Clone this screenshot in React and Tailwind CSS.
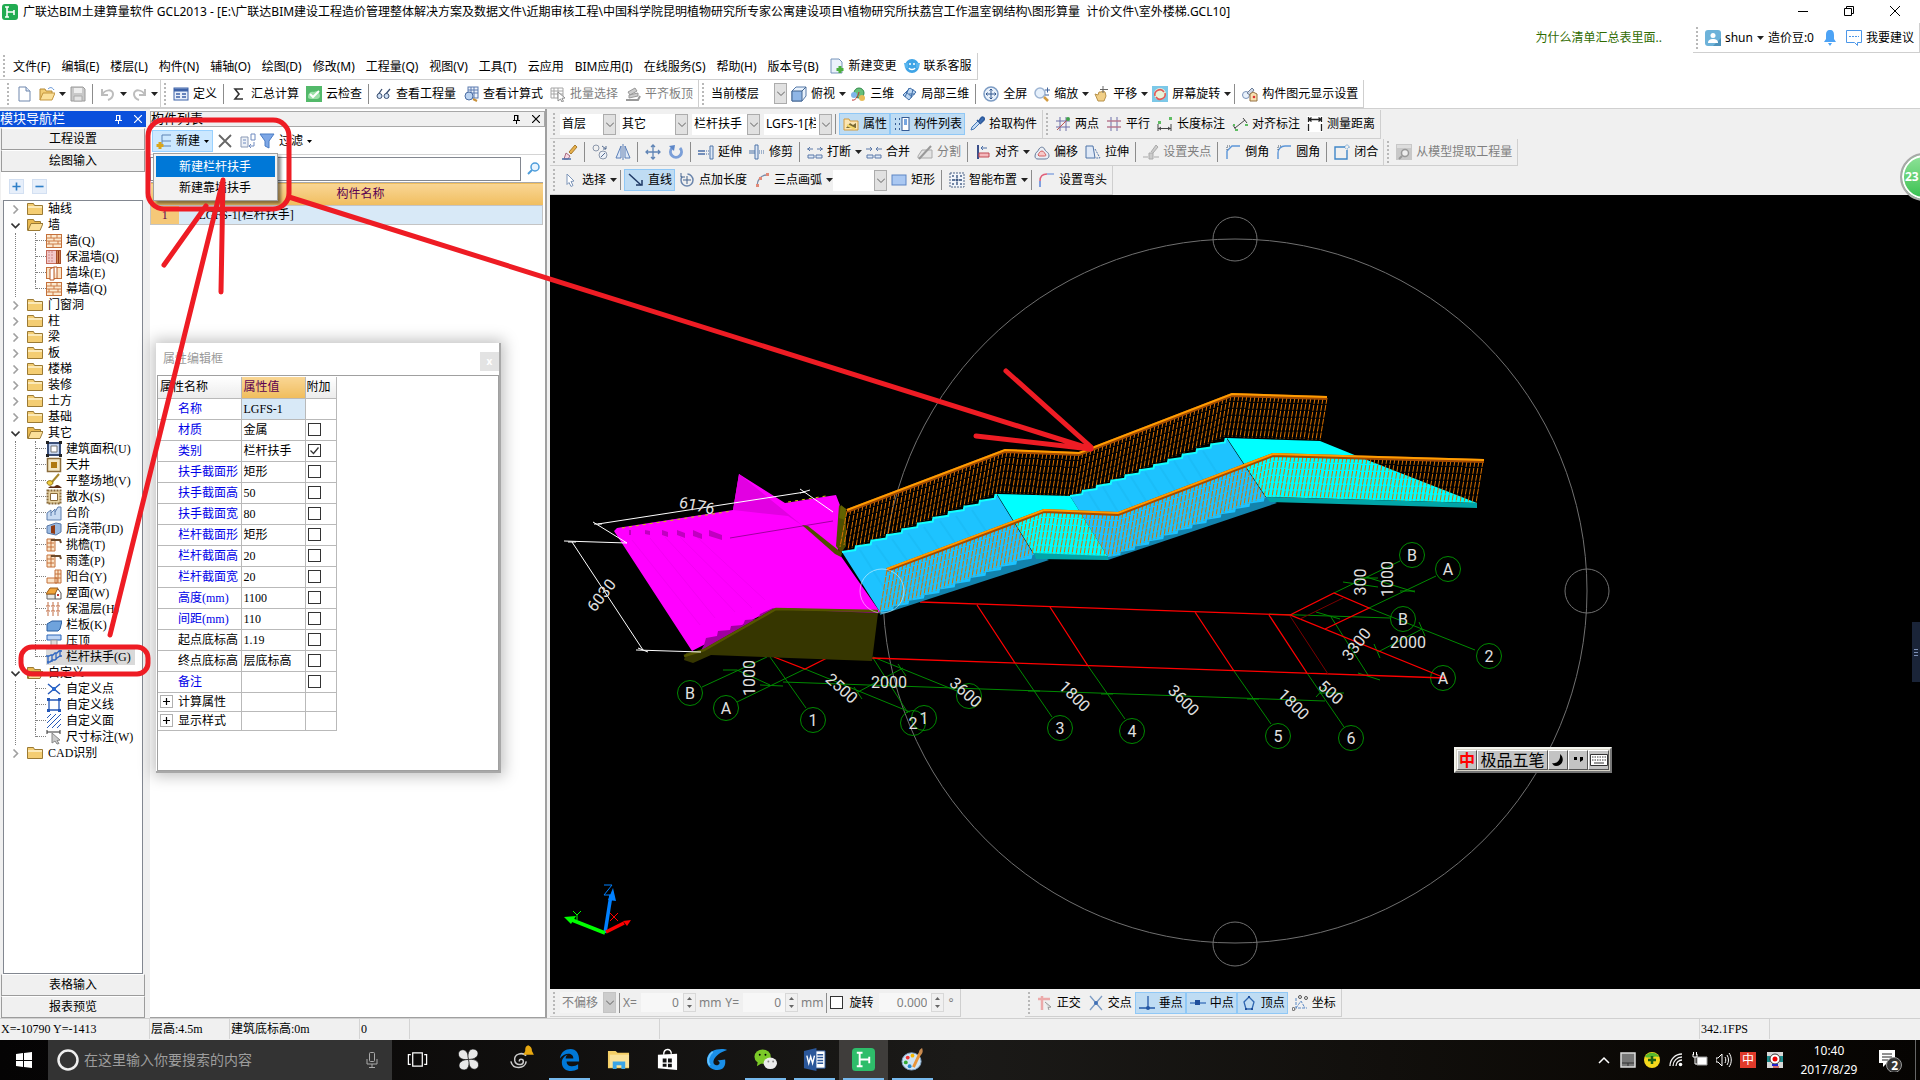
import React from "react";

const UI = "font-['Noto_Sans','Noto_Sans_CJK_SC',sans-serif]";
const SONG = "font-['Liberation_Serif','Noto_Sans_CJK_SC',serif]";

/* ---------- 16px tool icons ---------- */
const B = "#4f74a8";
const glyphs = {
  page: <><path d="M3 1h7l4 4v10H3z" fill="#fff" stroke="#6f87ad" /><path d="M10 1v4h4" fill="#dbe6f5" stroke="#6f87ad" /></>,
  open: <><path d="M1 14V3h5l1 2h6v2" fill="#f2cd75" stroke="#b58a36" /><path d="M1 14l3-7h12l-3 7z" fill="#fbe09a" stroke="#c4963f" /><path d="M9 3c2-2 4-2 6 1" fill="none" stroke="#5b8fd6" /></>,
  save: <><path d="M1 1h12l2 2v12H1z" fill="#c9c9c9" stroke="#9a9a9a" /><path d="M4 2h8v5H4z" fill="#eee" /><path d="M4 10h8v5H4z" fill="#e4e4e4" stroke="#aaa" /></>,
  undo: <path d="M2 3v6h6M2 9c3-6 11-6 11-1 0 3-2 5-5 6" fill="none" stroke="#bdbdbd" strokeWidth="2" />,
  redo: <path d="M14 3v6H8M14 9C11 3 3 3 3 8c0 3 2 5 5 6" fill="none" stroke="#bdbdbd" strokeWidth="2" />,
  define: <><rect x="1" y="2" width="14" height="12" fill="#e8effa" stroke="#3d62a8" /><path d="M1 4h14" stroke="#3d62a8" strokeWidth="3" /><path d="M3 8h4M3 11h4M9 8h4M9 11h4" stroke="#3d62a8" strokeWidth="1.5" /></>,
  sigma: <path d="M12 3H4l4 5-4 5h8" fill="none" stroke="#333" strokeWidth="1.6" />,
  check: <><rect width="16" height="16" fill="#53b96a" /><path d="M2 11c0-4 3-6 6-5 3-2 6 1 6 4 0 2-2 3-3 3H5c-2 0-3-1-3-2z" fill="#9be0a8" /><path d="M4 8l3 3 6-6" fill="none" stroke="#fff" strokeWidth="2" /></>,
  glasses: <><path d="M2 9l4-6M9 9l5-6" fill="none" stroke="#3a4f70" strokeWidth="1.3" /><circle cx="3.500" cy="10" r="2.500" fill="#cfe0f5" stroke="#3a4f70" /><circle cx="10.500" cy="10" r="2.500" fill="#cfe0f5" stroke="#3a4f70" /></>,
  calc: <><rect x="5" y="1" width="10" height="11" fill="#eef3fb" stroke="#5b7bb0" /><path d="M5 4h10M5 7h10M8 1v11M11 1v11" stroke="#5b7bb0" /><circle cx="6" cy="10" r="4" fill="#bcd4f2" stroke="#4b6da3" /><path d="M10 13l4 2" stroke="#c8903a" strokeWidth="2" /></>,
  batch: <><path d="M1 2h12v10H1zM1 5h12M1 8h12M4 2v10M8 2v10" fill="none" stroke="#a5a5a5" /><path d="M8 6l7 6-3 .3 1.500 3-1.500.7-1.500-3-2.500 2z" fill="#fff" stroke="#8d8d8d" /></>,
  slab: <><path d="M3 6l7-4 2 3-7 4zM4 9l9-2v3l-9 2z" fill="#ccc" stroke="#999" /><path d="M1 14h12l2-4" fill="none" stroke="#999" strokeWidth="2" /></>,
  cube: <><path d="M1 5l4-4h10v9l-4 5H1z" fill="#e9f2fc" stroke="#5578a8" /><path d="M1 5h10v10H1z" fill="#8fb6e6" stroke="#43658f" /><path d="M11 5l4-4" stroke="#43658f" /></>,
  orbit: <><circle cx="9" cy="7" r="5" fill="#67c07a" stroke="#31894a" /><circle cx="4" cy="9" r="3" fill="#7fb5ea" /><circle cx="12" cy="12" r="3" fill="#e9bd58" /><path d="M2 14c3 1 6-3 7-8" stroke="#b33" fill="none" /></>,
  local3d: <><path d="M2 9l7-7 6 4-7 8z" fill="#bcd6f2" stroke="#3f6ea8" /><path d="M5 6l6 5M4 11l4-9M12 3l-2 9M8 8l6 0" stroke="#3f6ea8" fill="none" /></>,
  full: <><circle cx="8" cy="8" r="7" fill="#eaf2fb" stroke="#7d9cc4" strokeWidth="1.500" /><path d="M8 3v10M3 8h10M6.500 4.500L8 3l1.500 1.500M6.500 11.500L8 13l1.500-1.500M4.500 6.500L3 8l1.500 1.500M11.500 6.500L13 8l-1.500 1.500" fill="none" stroke="#33588f" /></>,
  zoom: <><circle cx="6" cy="7" r="5" fill="#e6f0fb" stroke="#9db4d2" strokeWidth="1.500" /><path d="M10 11l4 4" stroke="#d39b3f" strokeWidth="2.500" /><path d="M11 4h5M13.500 1.500v5M11 9h4" stroke="#40639a" /></>,
  pan: <><path d="M2 8l3 1 1-3 2 0 2-1 2 1 1 4-2 5H5z" fill="#f1cf87" stroke="#b8924a" /><path d="M10 0v7M7 3.500h8" stroke="#666" /></>,
  screen: <><rect width="16" height="16" fill="#7cc8e8" /><rect x="2" y="2" width="12" height="12" rx="6" fill="#e8f3d8" /><path d="M3 10a5 5 0 0 1 9-4M13 7a5 5 0 0 1-9 4" fill="none" stroke="#e05a5a" strokeWidth="1.600" /></>,
  display: <><circle cx="4" cy="9" r="3.500" fill="#e9f1fb" stroke="#7a93b8" /><path d="M5 7l5-5 2 2-4 5z" fill="#cdd6e4" stroke="#6d7f99" /><path d="M8 15V8l3-2 4 2v7z" fill="#f8e0b0" stroke="#947040" /><circle cx="12" cy="11" r="1.300" fill="#d33" /></>,
  props: <><path d="M1 3h5l1 2h8v9H1z" fill="#fbe5b3" stroke="#d39b3f" /><path d="M3 12l4-5 3 2 3-2v5z" fill="#7a6a35" /><path d="M4 9l8 4" stroke="#f6d96c" strokeWidth="2" /></>,
  list: <><path d="M1 3h2M1 8h2M1 13h2M5 3h1M5 8h1M5 13h1" stroke="#345b95" strokeWidth="2" strokeDasharray="1 1" /><rect x="8" y="1.500" width="7" height="13" fill="#fff" stroke="#345b95" /><path d="M10 4h3M10 6h3M10 8h3" stroke="#4c8ad8" strokeWidth="1.500" /></>,
  picker: <><path d="M2 14l1-3 6-6 2 2-6 6z" fill="#c5dcf5" stroke="#4777b5" /><path d="M8 4l4 4M10 5l2-3c2-2 4 0 3 2l-3 3" fill="#3d6fb5" stroke="#2d5a9c" strokeWidth="1.500" /></>,
  twopt: <><path d="M5 1v14M11 1v14M1 5h14M1 11h14" stroke="#6c6fa8" /><path d="M2 14L14 2" stroke="#b55" /><circle cx="13" cy="3" r="2" fill="#3fa04b" /></>,
  parallel: <><path d="M5 1v14M11 1v14" stroke="#6c6fa8" /><path d="M1 5h14M1 11h14" stroke="#b87a90" strokeWidth="1.500" /></>,
  lendim: <><path d="M1 8v7M14 8v7M1 12.500h13M4 11l-2 1.500L4 14M11 11l2 1.500-2 1.500" fill="none" stroke="#444" /><path d="M1 5h3v3H1zM12 1h3v3h-3z" fill="#5ebd62" /></>,
  aligndim: <><path d="M3 12L13 4M1 9l3 5M11 2l4 5" fill="none" stroke="#444" /><path d="M1 8h2v2H1zM3 13h3v2H3zM13 8h3v2h-3z" fill="#5ebd62" /></>,
  measure: <><rect width="16" height="16" fill="#fff" /><path d="M1.500 1v5M14.500 1v5M2 3.500h12M4.500 1.500L2 3.500l2.500 2M11.500 1.500L14 3.500l-2.500 2M1.500 8v7M14.500 8v7" fill="none" stroke="#222" strokeWidth="1.300" /></>,
  brush: <><path d="M7 8l6-7 2 2-6 7z" fill="#e8b14d" stroke="#a87b2e" /><path d="M4 9l4 3-2 3H2z" fill="#f7d8e2" stroke="#a66a80" /><path d="M0 15h9" stroke="#4a6fa8" strokeWidth="1.500" /></>,
  copy: <><circle cx="4" cy="4" r="3" fill="none" stroke="#8b97ab" /><circle cx="11" cy="11" r="4" fill="#edf1f7" stroke="#8b97ab" /><path d="M9 13l4-4M10 2l4 3M14 2v3h-3" fill="none" stroke="#536a90" /></>,
  mirror: <><path d="M6 2v12H1zM10 2v12h5z" fill="#dfe9f7" stroke="#5b7fb8" /><path d="M8 0v16" stroke="#5b7fb8" /></>,
  move: <path d="M8 1v14M1 8h14M6 3l2-2 2 2M6 13l2 2 2-2M3 6L1 8l2 2M13 6l2 2-2 2" fill="none" stroke="#5f84b5" strokeWidth="1.300" />,
  rotate: <><path d="M4 4a5.500 5.500 0 1 0 8 0" fill="none" stroke="#7b9fd8" strokeWidth="3" /><path d="M1 2l6-1-1 6z" fill="#5c86c8" /></>,
  extend: <><path d="M0 7h7M0 10h7" stroke="#4a6ea6" strokeWidth="1.500" /><path d="M8 7h3M8 10h3" stroke="#4a6ea6" strokeDasharray="1 1" /><path d="M12 2h3v13h-3z" fill="#dfe9f7" stroke={B} /></>,
  trim: <><path d="M6 1h3v14H6z" fill="#dfe9f7" stroke={B} /><path d="M0 7h6M0 9h6" stroke={B} /><path d="M10 7h6M10 9h6" stroke={B} strokeDasharray="1 1" /></>,
  cut: <><path d="M1 11h6v3H1zM9 11h6v3H9z" fill="#dfe9f7" stroke="#5b79a8" /><path d="M0 5h6M10 5h6M3 3L1 5l2 2M13 3l2 2-2 2" fill="none" stroke="#5b79a8" /></>,
  merge: <><path d="M1 11h6v3H1zM9 11h6v3H9z" fill="#dfe9f7" stroke="#5b79a8" /><path d="M0 5h6M10 5h6M4 3l2 2-2 2M12 3l-2 2 2 2" fill="none" stroke="#5b79a8" /></>,
  split: <><path d="M1 12l4-6h10v8H1z" fill="#e4e4e4" stroke="#aaa" /><path d="M2 15L14 2" stroke="#999" strokeWidth="2" /></>,
  align: <><path d="M3 1v14" stroke="#3a4f8a" strokeWidth="2" /><path d="M4 9h10v4H4z" fill="#f4b8bc" stroke="#c04a55" /><path d="M6 4h6M8 2L6 4l2 2" fill="none" stroke="#4a6ea6" /></>,
  offset: <><path d="M1 12c0-4 3-4 4-7 2-3 5-2 6 1 1 2 4 2 4 6 0 2-2 3-4 3H4c-2 0-3-1-3-3z" fill="#e9eef5" stroke="#667a99" /><path d="M4 11c1-2 2-4 4-4s3 3 4 4c0 1-1 1-2 1H5z" fill="#f7c9c9" stroke="#d46060" /></>,
  stretch: <><path d="M1 2h7l2 12H1z" fill="#dfe9f7" stroke={B} /><path d="M10 5l5 9h-5" fill="none" stroke={B} strokeDasharray="2 1" /></>,
  grip: <><path d="M0 13h5M11 13h5" stroke="#aaa" /><path d="M6 9h4v6H6zM8 8l5-7 2 2-5 6" fill="#ccc" stroke="#aaa" /></>,
  chamfer: <><path d="M2 15V7l5-5h8" fill="none" stroke="#5b95d8" strokeWidth="1.400" /><path d="M2 6V2h4" fill="none" stroke="#456" strokeDasharray="1 1" /></>,
  fillet: <><path d="M2 15V9c0-4 3-7 7-7h6" fill="none" stroke="#5b95d8" strokeWidth="1.400" /><path d="M2 6V2h4" fill="none" stroke="#456" strokeDasharray="1 1" /></>,
  close: <><path d="M11 3H1v12h12V6" fill="none" stroke="#3f86c8" strokeWidth="1.400" /><circle cx="13" cy="3" r="2" fill="none" stroke="#3f86c8" strokeDasharray="1 1" /></>,
  extract: <><rect width="16" height="16" fill="#c8c8c8" /><path d="M1 1h14v3H1z" fill="#ddd" /><circle cx="9" cy="9" r="3.500" fill="#eee" stroke="#999" strokeWidth="1.500" /><path d="M6 12l-3 3" stroke="#999" strokeWidth="2" /></>,
  cursor: <path d="M5 2l7 7-3 .5 2 4-2 1-2-4-2 2z" fill="#fff" stroke="#7d95b8" />,
  line: <><path d="M1 2l12 11" stroke="#1f3864" strokeWidth="1.500" /><path d="M8 13h6V8" fill="none" stroke="#1f3864" strokeWidth="1.500" /></>,
  ptlen: <><circle cx="8" cy="8" r="6" fill="none" stroke="#6b86ad" strokeDasharray="22 6" strokeWidth="1.500" /><path d="M8 4v8M4 8h8M2 1v4h4" fill="none" stroke="#47648f" /></>,
  arc: <><path d="M3 14C3 8 7 3 13 3" fill="none" stroke="#7a8ca8" strokeWidth="1.300" /><path d="M2 12h3v3H2zM5 5h3v3H5zM12 1h3v3h-3z" fill="#e28a78" /></>,
  rect: <rect x="1" y="3" width="14" height="10" fill="#aac8f2" stroke="#5c85c4" />,
  smart: <><rect x="1" y="1" width="14" height="14" fill="#f2f5fa" stroke="#4d6487" strokeDasharray="2 1" /><path d="M8 3v3M8 10v3M3 8h3M10 8h3M8 6.500v3M6.500 8h3M4 3v2M12 3v2M4 11v2M12 11v2" stroke="#2d4a78" strokeWidth="1.300" /></>,
  elbow: <><path d="M1 15V9" stroke="#5b85d8" strokeWidth="1.500" /><path d="M1 9c0-5 2-7 7-7" fill="none" stroke="#e0607a" strokeWidth="1.500" /><path d="M8 2h7" stroke="#5b85d8" /></>,
  ortho: <><path d="M5 1v14M1 4h12" stroke="#ecaaaa" strokeWidth="2.500" /><path d="M8 7l6 5-3 .5 1 2.500" fill="#ddd" stroke="#999" /></>,
  cross: <><path d="M2 1l12 14M14 1L2 15" stroke="#7d9cc4" strokeWidth="1.300" /><circle cx="8" cy="8" r="2" fill="#3f6fb5" /></>,
  perp: <><path d="M9 1v12M0 13h16" stroke="#2458a6" strokeWidth="1.300" /><circle cx="9" cy="13" r="2" fill="#2458a6" /></>,
  mid: <><path d="M0 8h16" stroke="#4a7cc0" strokeWidth="1.500" /><rect x="5" y="5" width="5" height="5" fill="#1f4f9c" /></>,
  vertex: <><path d="M8 2l5 5-2 7H5L3 7z" fill="none" stroke="#2f66b0" strokeWidth="1.300" /><path d="M7 1h2v2H7zM4 13h2v2H4zM10 13h2v2h-2z" fill="#1f4f9c" /></>,
  coord: <><path d="M4 3v10h11M4 13l5-7 4 7" fill="none" stroke="#5b89c4" strokeDasharray="3 1" /><circle cx="8" cy="2" r="1.500" fill="none" stroke="#555" /><circle cx="14" cy="3" r="1.500" fill="none" stroke="#555" /><circle cx="1.500" cy="14" r="1.500" fill="none" stroke="#555" /></>,
  newdoc: <><path d="M2 1h8l3 3v11H2z" fill="#eaf2fb" stroke="#7694bb" /><path d="M11 8v7M7.500 11.500h7" stroke="#4caf3f" strokeWidth="3" /></>,
  service: <><circle cx="8" cy="8" r="7" fill="#3fa4e6" /><path d="M0 5h4v5H1zM12 5h4l-1 5h-3z" fill="#57b4ee" /><path d="M5 6h2M9 6h2M5 10c1 2 5 2 6 0" stroke="#fff" strokeWidth="1.500" fill="none" /></>,
  add: <><path d="M6 2h9M6 8h9M6 13h9M6 2v11" stroke="#5c83b5" fill="none" /><path d="M4 9v7M.5 12.500h7" stroke="#d9a51c" strokeWidth="3" /></>,
  del: <path d="M2 2l12 12M14 2L2 14" stroke="#666" strokeWidth="1.800" />,
  dup: <><path d="M1 4h7v10H1z" fill="#edf1f7" stroke="#8a99b5" /><path d="M3 7h3M3 10h3M11 1h4v6h-4zM14 9v4h-4M11 11l-2 2 2 2" fill="none" stroke="#6f8abf" /></>,
  funnel: <path d="M1 1h14l-5 7v7l-4-2V8z" fill="#7da7e6" stroke="#4b7cc4" />,
  brick: <><rect x=".5" y="1.500" width="15" height="13" fill="#fbe9d0" stroke="#c4703a" /><path d="M1 5h14M1 8h14M1 11h14M5 2v3M11 2v3M8 5v3M3 8v3M12 8v3M7 11v3" stroke="#cc7a44" /></>,
  insul: <><rect x=".5" y="1.500" width="10" height="13" fill="#f2c9c9" stroke="#c46a5a" /><path d="M3 2v12M6 2v12" stroke="#c88" strokeDasharray="2 1" /><rect x="10.500" y="1.500" width="4" height="13" fill="#e2a06a" stroke="#a8502a" /><path d="M12.500 2v12" stroke="#93371a" strokeWidth="1.500" /></>,
  pier: <><rect x=".5" y="2.500" width="15" height="11" fill="#fbe3c6" stroke="#c4703a" /><path d="M4 4l4-2v13H4zM8 2h3v12" fill="#fff" stroke="#b85a28" /></>,
  area: <><path d="M2 2h12v12H2z" fill="#c4d4ef" stroke="#3a4f7a" strokeWidth="2" /><path d="M5 5h6v6H5z" fill="#fff" stroke="#777" /><path d="M0 0h3v3H0zM13 0h3v3h-3zM0 13h3v3H0zM13 13h3v3h-3z" fill="#222" /></>,
  well: <><path d="M1.500 1.500h13v13h-13z" fill="#f5e8c4" stroke="#8a6b3a" strokeWidth="1.500" /><path d="M5 5h6v6H5z" fill="#b07a10" /></>,
  ground: <><path d="M13 1l-7 8" stroke="#a8872c" strokeWidth="2" /><path d="M1 9c2-2 5-2 6 1-1 3-5 3-6 0z" fill="#f0cc3c" stroke="#8f7316" /><path d="M2 15c3-4 5 0 7-2s4-1 7 2z" fill="#5a2a14" /></>,
  apron: <><path d="M1.500 1.500h13v13h-13z" fill="#e9d5a4" stroke="#8a6b3a" strokeWidth="2" strokeDasharray="2 1" /><path d="M4.500 4.500h7v7h-7z" fill="#fff" stroke="#8a6b3a" /></>,
  steps: <><path d="M1 15V8l4-3v3l4-4v3l3-5h3v13z" fill="#c9dbf2" stroke="#5d7eae" /><path d="M5 8v3M9 7v3" stroke="#5d7eae" /></>,
  belt: <><path d="M1 5l9-3 5 1v8l-5 3-9-2z" fill="#9cbbe2" stroke="#5878a8" /><path d="M5 5l4-1v9l-4-1z" fill="#8f3a14" /></>,
  eave: <><path d="M1 2h8v12H1z" fill="#fbe3c6" stroke="#c4703a" /><path d="M1 6h7M1 10h7M5 2v12" stroke="#c4703a" /><path d="M5 3h9l1 3" fill="none" stroke="#6b4a2c" strokeWidth="2" /></>,
  balcony: <><path d="M9 1h6v13H9zM1 9h10v5H1zM9 5h6M9 9h6M12 1v13" fill="#fbe3c6" stroke="#c4703a" /></>,
  roof: <><path d="M9 7l3-3 3 4v6H9z" fill="#fff" stroke="#555" /><path d="M1 9h8v5H1z" fill="#e8e8e8" stroke="#666" /><path d="M0 9l4-6h8L9 9z" fill="#f0a53c" stroke="#9b5c18" /><path d="M11 9h2v2h-2z" fill="#b33" /></>,
  heat: <path d="M2 1v14M7 1v14M12 1v14M0 5h15M0 10h15" stroke="#c06a40" strokeDasharray="4 1" />,
  panel: <path d="M1 7l5-3h10l-2 8-2 2H1z" fill="#6fa3dc" stroke="#2a5d9e" />,
  coping: <><path d="M1 2h14v5H1z" fill="#bcd4f5" stroke="#2d66b8" /><path d="M5 7h6v8H5z" fill="#ddd" stroke="#999" /></>,
  rail: <path d="M2 15V7M6 13V6M10 11V4M14 8V1M0 7h3l2-1h2l2-2h2l2-2h3M1 13h3l2-2h3l2-2 3-2h2" fill="none" stroke="#2f66c0" strokeWidth="1.300" />,
  cpt: <><path d="M2 3l12 10M14 3L2 13" stroke="#2458b8" strokeWidth="1.500" /><path d="M6 6h4v4H6z" fill="#2a6ad0" /></>,
  cline: <><path d="M3 3h10v10H3z" fill="#fff" stroke="#2458b8" strokeWidth="1.300" /><path d="M1 1h3v3H1zM12 1h3v3h-3zM1 12h3v3H1zM12 12h3v3h-3z" fill="#2458b8" /></>,
  cface: <path d="M1 5l4-4M1 10l9-9M1 15L15 1M6 15l9-9M11 15l4-4" stroke="#2458b8" />,
  dim: <><path d="M1 1v4M14 1v4M1 3h13" stroke="#333" /><path d="M6 4l8 7-3 .5 2 3-2 .5-2-3-3 2z" fill="#ccc" stroke="#888" /></>,
  folder: <><path d="M.5 13.500v-11h6l1 2h8v9z" fill="#f4cd72" stroke="#9b7a34" /><path d="M1 6h14" stroke="#fbe9b8" strokeWidth="2" /></>,
  folderOpen: <><path d="M.5 13.500v-11h6l1 2h6v2" fill="#e9b950" stroke="#9b7a34" /><path d="M1 13.500l3-7h12l-3 7z" fill="#fbdf98" stroke="#9b7a34" /></>,
};
const Icon = ({ n }) => <svg className="size-4 shrink-0" viewBox="0 0 16 16" aria-hidden="true">{glyphs[n]}</svg>;

const Caret = () => (
  <svg className="h-1 w-[7px] shrink-0" viewBox="0 0 7 4" aria-hidden="true"><path d="M0 0h7L3.500 4z" fill="#222" /></svg>
);

function Tool({ i, t, caret, on, off }) {
  return (
    <button
      disabled={off}
      aria-label={t || i}
      className={`flex h-[22px] shrink-0 items-center gap-1 border pl-[3px] ${caret ? "border-r-0 pr-0" : "pr-[2px]"} ${on ? "border-[#90c8f6] bg-[#bfdcf3]" : "border-transparent"} ${off ? "text-[#7f7f7f]" : ""}`}
    >
      {i && <Icon n={i} />}
      {t && <span className="whitespace-nowrap">{t}</span>}
      {caret && <Caret />}
    </button>
  );
}
const Sep = () => <span className="mx-[3px] h-5 w-px shrink-0 bg-[#8c8c8c]" />;
const Grip = () => <span className="mx-[3px] h-[22px] w-0 shrink-0 border-l-2 border-dotted border-[#b8b8b8]" />;
function Band({ children, className = "" }) {
  return <div className={`flex items-center border-r border-b border-[#cfcfcf] pr-[2px] ${className}`}>{children}</div>;
}
function Combo({ v, w, off, label }) {
  return (
    <span className={`relative flex h-[21px] shrink-0 ${w}`}>
      <select aria-label={label} disabled={off} className={`h-full w-full appearance-none overflow-hidden pl-0.5 pr-4 text-xs ${off ? "bg-[#f4f4f4] text-[#7f7f7f]" : "bg-white"}`}>
        <option>{v}</option>
      </select>
      <span className={`pointer-events-none absolute inset-y-0 right-0 flex w-[13px] items-center justify-center border ${off ? "border-[#c4c4c4] bg-[#cccccc]" : "border-[#acacac] bg-[#e1e1e1]"}`}>
        <svg className="h-[5px] w-2" viewBox="0 0 8 5"><path d="M0 .5l4 4 4-4" fill="none" stroke="#606060" /></svg>
      </span>
    </span>
  );
}
function Spin({ v, w, label }) {
  return (
    <span className="flex h-[19px] shrink-0">
      <input aria-label={label} disabled defaultValue={v} className={`bg-[#f7f7f7] pr-1 text-right text-xs text-[#7f7f7f] ${w}`} />
      <span className="flex w-[13px] flex-col border border-[#d8d8d8] bg-[#f0f0f0]">
        <button disabled aria-label={`${label} +`} className="flex flex-1 items-center justify-center"><svg className="h-[3px] w-[5px]" viewBox="0 0 5 3"><path d="M0 3h5L2.500 0z" fill="#666" /></svg></button>
        <button disabled aria-label={`${label} -`} className="flex flex-1 items-center justify-center"><svg className="h-[3px] w-[5px]" viewBox="0 0 5 3"><path d="M0 0h5L2.500 3z" fill="#666" /></svg></button>
      </span>
    </span>
  );
}
const Pin = () => <svg className="h-[9px] w-[7px]" viewBox="0 0 7 9"><path d="M1.500 0v5M5 0v5M1 .5h4M0 5.500h7M3.500 6v3M4.500 0v5" stroke="currentColor" fill="none" /></svg>;
const Ex = () => <svg className="size-2" viewBox="0 0 8 8"><path d="M0 0l8 8M8 0L0 8" stroke="currentColor" strokeWidth="1.200" /></svg>;

/* ---------- header ---------- */
function Header() {
  const menu = ["文件(F)", "编辑(E)", "楼层(L)", "构件(N)", "辅轴(O)", "绘图(D)", "修改(M)", "工程量(Q)", "视图(V)", "工具(T)", "云应用", "BIM应用(I)", "在线服务(S)", "帮助(H)", "版本号(B)"];
  return (
    <header className="bg-white">
      <div className="flex h-[23px] items-center pl-0.5">
        <svg className="mr-[5px] size-4" viewBox="0 0 16 16"><rect width="16" height="16" rx="3" fill="#22ac52" /><path d="M5 3v10M5 8h7M12 6v5M3 3h4M3 13h4" stroke="#fff" strokeWidth="1.600" /></svg>
        <h1 className="flex-1 whitespace-pre">广联达BIM土建算量软件 GCL2013 - [E:\广联达BIM建设工程造价管理整体解决方案及数据文件\近期审核工程\中国科学院昆明植物研究所专家公寓建设项目\植物研究所扶荔宫工作温室钢结构\图形算量  计价文件\室外楼梯.GCL10]</h1>
        <div className="flex gap-9 pr-5 pb-0.5">
          <button aria-label="最小化"><svg className="size-[10px]" viewBox="0 0 10 10"><path d="M0 5.500h10" stroke="#000" /></svg></button>
          <button aria-label="还原"><svg className="size-[10px]" viewBox="0 0 10 10"><path d="M.5 2.500h7v7h-7zM2.500 2.500v-2h7v7h-2" fill="none" stroke="#000" /></svg></button>
          <button aria-label="关闭"><svg className="size-[10px]" viewBox="0 0 10 10"><path d="M0 0l10 10M10 0L0 10" stroke="#000" /></svg></button>
        </div>
      </div>
      <div className="flex h-[30px] items-stretch justify-end">
        <a href="#faq" className="mr-[31px] self-center text-[#2f6b00]">为什么清单汇总表里面..</a>
        <Band className="gap-1">
          <Grip />
          <svg className="size-4" viewBox="0 0 16 16"><rect width="16" height="16" rx="3" fill="#6db2d9" /><path d="M8 16l8-8v8z" fill="#4e92ba" /><circle cx="8" cy="5.500" r="2.500" fill="#fff" /><path d="M3 13c0-3 2-4 5-4s5 1 5 4z" fill="#fff" /></svg>
          <span>shun</span><Caret />
          <span>造价豆:0</span>
          <svg className="mx-1.5 h-4 w-3" viewBox="0 0 12 16"><path d="M6 0c3 0 4 2 4 5v4l2 3H0l2-3V5c0-3 1-5 4-5zM4 13h4l-2 3z" fill="#4da3f5" /></svg>
          <svg className="h-4 w-4" viewBox="0 0 16 16"><path d="M.5.500h15v12h-4v3l-3-3h-8z" fill="#fff" stroke="#4c97e8" /><path d="M3 6.500h10" stroke="#4c97e8" strokeDasharray="2 1" /></svg>
          <button className="pr-[3px]">我要建议</button>
        </Band>
      </div>
      <div className="flex h-[27px]">
        <Band>
          <Grip />
          <nav className="flex pt-px">
            {menu.map((m) => <button key={m} className="pr-1.5 pl-[5px] whitespace-nowrap">{m}</button>)}
          </nav>
          <Tool i="newdoc" t="新建变更" />
          <Tool i="service" t="联系客服" />
        </Band>
      </div>
      <div className="flex h-[29px] border-b border-[#d0d0d0]">
        <Band>
          <span className="w-1" /><Grip /><Tool i="page" /><Tool i="open" caret /><Tool i="save" /><Sep /><Tool i="undo" caret /><Tool i="redo" caret />
        </Band>
        <Band>
          <Grip /><Tool i="define" t="定义" /><Sep />
          <Tool i="sigma" t="汇总计算" /><Tool i="check" t="云检查" /><Sep />
          <Tool i="glasses" t="查看工程量" /><Tool i="calc" t="查看计算式" /><Tool i="batch" t="批量选择" off /><Tool i="slab" t="平齐板顶" off />
        </Band>
        <Band>
          <Grip /><span className="w-0.5" /><Combo v="当前楼层" label="楼层范围" w="w-[78px]" /><Tool i="cube" t="俯视" caret /><Tool i="orbit" t="三维" /><Tool i="local3d" t="局部三维" /><Sep />
          <Tool i="full" t="全屏" /><Tool i="zoom" t="缩放" caret /><Tool i="pan" t="平移" caret /><Tool i="screen" t="屏幕旋转" caret /><Sep /><Tool i="display" t="构件图元显示设置" />
        </Band>
      </div>
    </header>
  );
}

/* ---------- navigation tree ---------- */
const tree = [
  ["轴线"],
  ["墙", [["brick", "墙(Q)"], ["insul", "保温墙(Q)"], ["pier", "墙垛(E)"], ["brick", "幕墙(Q)"]]],
  ["门窗洞"], ["柱"], ["梁"], ["板"], ["楼梯"], ["装修"], ["土方"], ["基础"],
  ["其它", [["area", "建筑面积(U)"], ["well", "天井"], ["ground", "平整场地(V)"], ["apron", "散水(S)"], ["steps", "台阶"], ["belt", "后浇带(JD)"], ["eave", "挑檐(T)"], ["eave", "雨蓬(P)"], ["balcony", "阳台(Y)"], ["roof", "屋面(W)"], ["heat", "保温层(H)"], ["panel", "栏板(K)"], ["coping", "压顶"], ["rail", "栏杆扶手(G)"]]],
  ["自定义", [["cpt", "自定义点"], ["cline", "自定义线"], ["cface", "自定义面"], ["dim", "尺寸标注(W)"]]],
  ["CAD识别"],
];
const NavBtn = ({ children }) => (
  <button className="h-[22px] w-full shrink-0 border border-[#9c9c9c] border-t-white bg-[#f0f0f0] text-center">{children}</button>
);
function Sidebar() {
  return (
    <aside className={`flex w-[146px] shrink-0 flex-col pt-[2px] ${SONG}`}>
      <div className="flex h-4 items-center bg-[#0a50dc] text-white">
        <h2 className="flex-1 text-[13px] leading-4">模块导航栏</h2>
        <button aria-label="固定" className="mr-3"><Pin /></button>
        <button aria-label="关闭" className="mr-1"><Ex /></button>
      </div>
      <div className="flex flex-1 flex-col px-px pt-px">
        <NavBtn>工程设置</NavBtn>
        <NavBtn>绘图输入</NavBtn>
        <div className="flex h-7 shrink-0 items-center gap-2 bg-white pl-2">
          {["M8 3v10M3 8h10", "M3 8h10"].map((d, k) => (
            <button key={d} aria-label={k ? "折叠" : "展开"} className="size-[15px] border border-[#d3e0f2] bg-[#e7effa]"><svg viewBox="0 0 16 16"><path d={d} stroke="#2f7fc8" strokeWidth="2" /></svg></button>
          ))}
        </div>
        <ul className="mx-0.5 flex-1 border border-[#828790] bg-white">
          {tree.map(([name, kids]) => (
            <li key={name}>
              <div className="flex h-4 items-center">
                <span className="flex w-[23px] justify-center">
                  <svg className="size-[9px]" viewBox="0 0 9 9"><path d={kids ? "M.5 2.500l4 4 4-4" : "M2.500.500l4 4-4 4"} fill="none" stroke={kids ? "#333" : "#a0a0a0"} strokeWidth="1.600" /></svg>
                </span>
                <Icon n={kids ? "folderOpen" : "folder"} />
                <span className="ml-[5px]">{name}</span>
              </div>
              {kids && (
                <ul className="ml-[11px] border-l border-dotted border-[#808080]">
                  {kids.map(([ic, t], k) => (
                    <li key={t} className="flex h-4 items-center pl-[19px]">
                      <span className={`w-[11px] self-start border-l border-dotted border-[#808080] ${k === kids.length - 1 ? "h-2" : "h-4"}`}><span className="block h-2 border-b border-dotted border-[#808080]" /></span>
                      <span className={`flex h-4 items-center gap-1 pr-1 ${ic === "rail" ? "bg-[#d9d9d9]" : ""}`}><Icon n={ic} /><span className="whitespace-nowrap">{t}</span></span>
                    </li>
                  ))}
                </ul>
              )}
            </li>
          ))}
        </ul>
        <NavBtn>表格输入</NavBtn>
        <NavBtn>报表预览</NavBtn>
      </div>
    </aside>
  );
}

/* ---------- component list + property editor ---------- */
const props = [
  ["名称", "LGFS-1", null, 1], ["材质", "金属", 0, 1], ["类别", "栏杆扶手", 1, 1], ["扶手截面形", "矩形", 0, 1], ["扶手截面高", "50", 0, 1],
  ["扶手截面宽", "80", 0, 1], ["栏杆截面形", "矩形", 0, 1], ["栏杆截面高", "20", 0, 1], ["栏杆截面宽", "20", 0, 1], ["高度(mm)", "1100", 0, 1],
  ["间距(mm)", "110", 0, 1], ["起点底标高", "1.19", 0, 0], ["终点底标高", "层底标高", 0, 0], ["备注", "", 0, 1],
];
function PropertyWindow() {
  return (
    <section className="absolute top-[234px] left-[6px] flex h-[430px] w-[345px] flex-col border-r-2 border-b-2 border-[#a8a8a8] bg-white pl-px shadow-[0_0_14px_3px_rgba(0,0,0,0.25)]">
      <div className="flex h-8 shrink-0 items-center pl-1.5">
        <h3 className="flex-1 text-[#9a9a9a]">属性编辑框</h3>
        <button aria-label="关闭属性编辑框" className="mt-1 size-[19px] bg-[#e3e3e3] text-center text-[10px] leading-4 font-bold text-white">x</button>
      </div>
      <div className={`flex-1 border border-[#a0a0a0] pt-px ${SONG}`}>
        <table className="w-[178px] table-fixed border-collapse text-left leading-4">
          <colgroup><col className="w-[83px]" /><col className="w-16" /><col className="w-[31px]" /></colgroup>
          <thead>
            <tr className="h-[21px] border-b border-[#b9b9b9] [&>th]:border-r [&>th]:border-[#b9b9b9] [&>th]:bg-linear-to-b [&>th]:font-normal">
              <th className="from-white to-[#ececec] pl-0.5">属性名称</th>
              <th className="from-[#f9d694] to-[#f0bd5c] pl-0.5 text-[#5b0050]">属性值</th>
              <th className="from-white to-[#ececec] pl-px whitespace-nowrap">附加</th>
            </tr>
          </thead>
          <tbody className="[&_td]:border-r [&_td]:border-b [&_td]:border-[#b9b9b9]">
            {props.map(([n, v, c, blue]) => (
              <tr key={n} className="h-[21px]">
                <td className={`overflow-hidden pl-5 whitespace-nowrap ${blue ? "text-[#0000e8]" : ""}`}>{n}</td>
                <td className={`pl-0.5 ${n === "名称" ? "bg-[#d8e9f7]" : ""}`}>{v}</td>
                <td className="pl-0.5">
                  {c !== null && (
                    <label className="relative block size-[13px]">
                      <input type="checkbox" defaultChecked={!!c} aria-label={`${n} 附加`} className="peer block size-[13px] appearance-none border border-[#333] bg-white" />
                      <svg className="pointer-events-none absolute inset-0 hidden peer-checked:block" viewBox="0 0 13 13"><path d="M2.500 6.500l3 3 5-6" fill="none" stroke="#333" strokeWidth="1.300" /></svg>
                    </label>
                  )}
                </td>
              </tr>
            ))}
            {["计算属性", "显示样式"].map((n) => (
              <tr key={n} className="h-[19px]">
                <td className="pl-0.5"><span className="flex items-center gap-[5px]"><button aria-label={`展开${n}`} className="size-[13px] border border-[#b0b0b0]"><svg viewBox="0 0 11 11"><path d="M5.500 2v7M2 5.500h7" stroke="#000" strokeWidth="1.200" /></svg></button>{n}</span></td>
                <td /><td />
              </tr>
            ))}
          </tbody>
        </table>
      </div>
    </section>
  );
}
function ListPanel() {
  return (
    <section className="relative ml-1 flex w-[397px] shrink-0 flex-col border-r-2 border-b border-[#a0a0a0] bg-white">
      <div className={`mt-[2px] flex h-4 items-center border border-[#a8a8a8] bg-[#f0f0f0] ${SONG}`}>
        <h2 className="flex-1 text-[13px] leading-4">构件列表</h2>
        <button aria-label="固定列表" className="mr-3"><Pin /></button>
        <button aria-label="关闭列表" className="mr-1"><Ex /></button>
      </div>
      <div className="flex h-7 shrink-0 items-center border-b border-[#d4d4d4] pt-px pl-0.5">
        <div className="relative">
          <button aria-haspopup="menu" className="flex h-[22px] items-center gap-1 border border-[#99d1ff] bg-[#cce8ff] px-[3px]"><Icon n="add" />新建<svg className="h-[3px] w-[5px]" viewBox="0 0 5 3"><path d="M0 0h5L2.500 3z" /></svg></button>
          <ul role="menu" className="absolute top-[23px] left-px z-20 w-[125px] border border-[#a0a0a0] bg-[#f2f2f2] p-0.5 shadow-[3px_3px_3px_rgba(0,0,0,0.45)]">
            <li role="menuitem" className="h-[21px] bg-[#0078d7] pl-[23px] leading-[21px] text-white">新建栏杆扶手</li>
            <li role="menuitem" className="h-[21px] pl-[23px] leading-[21px]">新建靠墙扶手</li>
          </ul>
        </div>
        <Tool i="del" /><Tool i="dup" />
        <button className="flex items-center gap-1"><Icon n="funnel" />过滤<svg className="h-[3px] w-[5px]" viewBox="0 0 5 3"><path d="M0 0h5L2.500 3z" /></svg></button>
      </div>
      <div className="flex h-[27px] shrink-0 items-center">
        <input aria-label="搜索构件" className="h-6 min-w-0 flex-1 border border-[#828790] bg-white" />
        <button aria-label="搜索" className="w-6 pl-1.5"><svg className="size-[13px]" viewBox="0 0 13 13"><circle cx="8" cy="5" r="4" fill="#e8f4ff" stroke="#4d9ddb" strokeWidth="1.500" /><path d="M5 8l-4 4" stroke="#4d9ddb" strokeWidth="2" /></svg></button>
      </div>
      <table className="mr-0.5 border-collapse">
        <colgroup><col className="w-7" /><col /></colgroup>
        <thead><tr className="h-[23px] border-t border-[#a8a8a8] bg-linear-to-b from-[#f9d694] to-[#f0bd5c] text-[#5b0050]"><th /><th className="text-center font-normal">构件名称</th></tr></thead>
        <tbody><tr className={`h-[19px] border border-[#c4c4c4] ${SONG} leading-4`}><td className="bg-[#f5c878] text-center text-[#5b0050]">1</td><td className="bg-[#d8e9f7] pl-5">LGFS-1[栏杆扶手]</td></tr></tbody>
      </table>
      <PropertyWindow />
    </section>
  );
}

/* ---------- 3D scene ---------- */
const lerp = (path, x) => {
  for (let k = 1; k < path.length; k++) {
    const [ax, ay] = path[k - 1], [bx, by] = path[k];
    if (x <= bx) return ay + ((by - ay) * (x - ax)) / (bx - ax);
  }
  return path[path.length - 1][1];
};
const stair = (x1, y1, x2, y2, n) => {
  const dx = (x2 - x1) / n, dy = (y2 - y1) / n, out = [];
  for (let k = 0; k < n; k++) {
    const x = x1 + dx * k, y = y1 + dy * k;
    out.push([x, y], [x + dx * 0.85, y + dy * 0.35], [x + dx * 0.9, y + dy]);
  }
  out.push([x2, y2]);
  return out;
};
const pts = (a) => a.map((p) => p.join(",")).join(" ");
const bars = (path, x1, x2) => {
  let d = "";
  for (let x = x1; x < x2; x += 4) d += `M${x} ${Math.round(lerp(path, x))}l-7 ${x < 852 ? 36 : 42}`;
  return d;
};
const rear = [[847, 511], [1005, 451], [1079, 454], [1232, 395], [1327, 398]];
const front = [[887, 570], [1044, 511], [1118, 514], [1273, 455], [1484, 461]];
const topA = stair(842, 552, 997, 495, 10), topB = stair(1070, 496, 1227, 439, 11);
const botA = stair(880, 612, 1034, 555, 10), botB = stair(1108, 557, 1266, 498, 11);
const axes = [[690, 693, "B"], [726, 708, "A"], [813, 720, "1"], [924, 718, "1"], [913, 723, "2"], [969, 696, ""], [1060, 728, "3"], [1132, 731, "4"], [1278, 736, "5"], [1351, 738, "6"], [1412, 555, "B"], [1448, 569, "A"], [1403, 619, "B"], [1489, 656, "2"], [1443, 678, "A"]];
const dims = [[697, 505, 12, "6176"], [601, 595, -52, "6030"], [749, 678, -90, "1000"], [842, 688, 42, "2500"], [889, 682, 0, "2000"], [966, 692, 42, "3600"], [1075, 696, 45, "1800"], [1184, 700, 45, "3600"], [1294, 704, 45, "1800"], [1331, 692, 42, "500"], [1356, 644, -52, "3300"], [1408, 642, 0, "2000"], [1360, 582, -90, "300"], [1387, 579, -90, "1000"]];

function Scene() {
  return (
    <svg className="block h-[793px] w-[1370px] max-w-none font-['Roboto',sans-serif]" viewBox="550 195 1370 793" role="img" aria-label="室外楼梯三维视图">
      <g fill="none" stroke="#707070">
        <circle cx="1235" cy="591" r="352" />
        <circle cx="1235" cy="239" r="22" /><circle cx="1587" cy="591" r="22" /><circle cx="1235" cy="944" r="22" />
      </g>
      <g stroke="#008a00" fill="none">
        <path d="M702 687L767 657M737 702L805 669M770 657L806 708M805 669L910 712M873 658L908 713M783 682L1325 701M723 670H737L770 685M760 685L783 686M858 692L903 668M873 657L957 691M1015 663L1052 717M1088 666L1125 719M1234 671L1271 724M1307 673L1344 727M1334 593L1400 561M1369 608L1436 576M1269 614L1390 618M1369 608L1475 650M1331 617L1368 675M1378 652L1422 629M1343 582L1378 587M1366 577L1415 592M1360 578h18M1400 591h15M1316 612l24 7M1358 673l22 7M1320 693h24M1028 691h12M1101 694h12M1247 699h12M854 687l8 12M898 664l8 12M1374 644l6 14M1419 622l6 14M1316 697l9-10" />
        {axes.map(([x, y]) => <circle key={`${x}-${y}`} cx={x} cy={y} r="12.500" />)}
      </g>
      <path d="M920 602L1290 615L1445 678L872 658M977 605L1015 663M1050 607L1088 666M1195 612L1234 671M1269 615L1307 673M1290 615L1334 593L1369 608L1325 629M774 657L805 669L827 658" fill="none" stroke="#f00" strokeWidth="1.300" />
      <path d="M1290 616L1328 674M1300 619L1343 598" stroke="#7a0000" />

      <polygon points="614,531 617,528 733,510 739,474 785,503 836,495 841,508 838,552 880,612 775,608 692,651" fill="#f0f" />
      <path d="M632 540L700 625M650 538L715 618M665 537L735 612M680 537L752 608M697 537L765 600" stroke="#f400f4" fill="none" />
      <polygon points="739,474 733,510 788,516 803,526" fill="#e200e2" />
      <path d="M622 528L732 511M788 502L826 496" stroke="#c8c800" strokeDasharray="3 4" />
      <path d="M730 538L833 521" stroke="#a000a0" />
      <path d="M629 530h2v5h-2zM645 530l5 1v4l-5-1zM662 530l6 2v5l-6-2zM677 530l8 3v5l-8-3zM693 530l9 4v5l-9-3zM709 530l13 5v5l-13-4z" fill="#c000c0" />
      <polygon points="802,525 808,526 842,553 841,557 835,554" fill="#4e4e00" />
      <polygon points="839,505 846,509 846,546 841,553 836,546" fill="#4e4e00" />
      <polygon points="841,505 846,509 845,520 839,518" fill="#626200" />
      <polygon points="704,645 706,638 717,636 718,631 730,630 731,626 743,625 745,620 758,619 760,614 773,608 878,611 878,614 775,613 700,652" fill="#a000a0" />
      <polygon points="773,609 878,613 872,661 711,655 693,663 684,660 686,653 702,650" fill="#363600" />
      <path d="M684 656L704 650L776 609L878 611" fill="none" stroke="#555500" strokeWidth="2.500" />

      <path d={bars(rear, 847, 1328)} stroke="#e07400" fill="none" strokeWidth="1" strokeDasharray="6 1" />
      <polyline points={pts(rear)} fill="none" stroke="#a34a00" strokeWidth="4" />
      <polyline points={pts(rear)} fill="none" stroke="#ff9c00" strokeWidth="2" transform="translate(0 -1)" />

      <polygon points="880,615 882,606 1034,553 1049,560" fill="#1283ad" />
      <polygon points="1108,560 1108,554 1266,497 1277,503" fill="#1283ad" />
      <polygon points={pts([...topA, ...botA.slice().reverse()])} fill="#1dc3ff" />
      <polygon points={pts([...topB, ...botB.slice().reverse()])} fill="#1dc3ff" />
      <path d="M860 550L895 605M876 545L912 596M892 539L928 590M908 533L944 584M924 527L959 578M940 521L975 572M956 516L990 566M972 510L1006 561M1088 492L1124 550M1103 487L1138 545M1117 482L1153 539M1131 477L1167 534M1145 472L1181 529M1160 467L1196 523M1174 461L1210 518M1188 456L1224 513M1203 451L1239 507" stroke="#1bbdf8" strokeWidth="2" fill="none" />
      <polygon points="997,494 1070,496 1108,557 1034,554" fill="#0ff" />
      <polygon points="1227,438 1320,441 1357,456 1477,503 1266,497" fill="#0ff" />
      <polygon points="1034,553 1108,556 1108,560 1036,559" fill="#00a5a8" />
      <polygon points="1266,497 1477,503 1477,508 1270,502" fill="#00a5a8" />
      <polyline points={pts(topA)} fill="none" stroke="#1ff" strokeWidth="2" />
      <polyline points={pts(topB)} fill="none" stroke="#1ff" strokeWidth="2" />

      <path d={bars(front, 887, 1485)} stroke="#d87000" fill="none" strokeWidth="1" strokeDasharray="6 1" />
      <polyline points={pts(front)} fill="none" stroke="#a34a00" strokeWidth="4" />
      <polyline points={pts(front)} fill="none" stroke="#ff9c00" strokeWidth="2" transform="translate(0 -1)" />
      <circle cx="882" cy="591" r="22" fill="none" stroke="#fff" strokeOpacity=".5" />

      <path d="M598 524L805 492M593 522L627 543M800 489L833 512M564 541L627 543M572 542L643 650M636 650L701 652M800 493l10-3M594 524h8M568 542h8M638 648l10 4" stroke="#fff" fill="none" />
      <g fill="#e0e0e0" fontSize="16" textAnchor="middle">
        {axes.map(([x, y, t]) => t && <text key={`${x}-${y}`} x={x} y={y + 6}>{t}</text>)}
        {dims.map(([x, y, r, t]) => <text key={`${x}-${y}`} x={x} y={y + 6} transform={`rotate(${r} ${x} ${y})`}>{t}</text>)}
      </g>
      <path d="M605 933L611 895" stroke="#0080ff" strokeWidth="3.500" /><path d="M613 888l3 13-8-1z" fill="#0080ff" />
      <path d="M605 933L572 920" stroke="#0f0" strokeWidth="3.500" /><path d="M564 917l12-1-5 8z" fill="#0f0" />
      <path d="M606 932L624 923" stroke="#f00" strokeWidth="3.500" /><path d="M631 920l-8 1 4 5z" fill="#f00" />
      <path d="M604 885h8l-8 10h8" stroke="#0080ff" fill="none" />
      <path d="M573 911l4 4 4-4M577 915v5" stroke="#0f0" fill="none" />
      <path d="M610 913l8 8M618 913l-8 8" stroke="#f00" />
    </svg>
  );
}
function ImeBar() {
  const cell = "flex h-5 items-center justify-center border border-t-white border-l-white border-r-[#555] border-b-[#555] bg-[#c3c3c3]";
  return (
    <div className="absolute top-[552px] left-[904px] flex border-2 border-t-[#f4f4ee] border-l-[#f4f4ee] border-r-[#777] border-b-[#777] bg-[#d6d3c8] p-px">
      <button className={`${cell} w-5 text-base leading-4 font-bold text-[#f00]`}>中</button>
      <button className={`${cell} w-[71px] text-base leading-4`}>极品五笔</button>
      <button aria-label="半角" className={`${cell} w-5`}><svg className="size-3" viewBox="0 0 12 12"><path d="M8 0c5 4 3 12-4 12-2 0-3-1-4-3 4 1 9-2 8-9z" /></svg></button>
      <button aria-label="标点" className={`${cell} w-5`}><svg className="size-3" viewBox="0 0 12 12"><path d="M2 3h3v3H2zM8 3h3v3L8 8z" /></svg></button>
      <button aria-label="软键盘" className={`${cell} w-[21px]`}><svg className="h-3 w-[18px]" viewBox="0 0 18 12"><path d="M.5.500h17v11H.500z" fill="#fff" stroke="#333" /><path d="M2 3h14M2 6h14" stroke="#333" strokeDasharray="1.500 1" /><path d="M4 9h10" stroke="#333" /></svg></button>
    </div>
  );
}
function Workspace() {
  return (
    <main className="ml-[3px] flex min-w-0 flex-1 flex-col overflow-hidden pt-px">
      <div className="flex h-[29px] shrink-0">
        <Band><Grip /><span className="w-0.5" />
          <div className="flex gap-1"><Combo v="首层" w="w-14" label="楼层" /><Combo v="其它" w="w-[68px]" label="类别" /><Combo v="栏杆扶手" w="w-[68px]" label="构件类型" /><Combo v="LGFS-1[栏杆扶手]" w="w-[68px]" label="构件" /></div>
          <Sep />
          <Tool i="props" t="属性" on /><Tool i="list" t="构件列表" on /><Tool i="picker" t="拾取构件" />
        </Band>
        <Band><Grip /><Tool i="twopt" t="两点" /><Tool i="parallel" t="平行" /><Tool i="lendim" t="长度标注" /><Tool i="aligndim" t="对齐标注" /><Tool i="measure" t="测量距离" /></Band>
      </div>
      <div className="flex h-[27px] shrink-0">
        <Band><Grip /><Tool i="brush" /><Sep /><Tool i="copy" /><Tool i="mirror" /><Sep /><Tool i="move" /><Tool i="rotate" /><Sep />
          <Tool i="extend" t="延伸" /><Tool i="trim" t="修剪" /><Sep /><Tool i="cut" t="打断" caret /><Tool i="merge" t="合并" /><Tool i="split" t="分割" off /><Sep />
          <Tool i="align" t="对齐" caret /><Tool i="offset" t="偏移" /><Tool i="stretch" t="拉伸" /><Sep /><Tool i="grip" t="设置夹点" off /><Sep />
          <Tool i="chamfer" t="倒角" /><Tool i="fillet" t="圆角" /><Sep /><Tool i="close" t="闭合" />
        </Band>
        <Band><Grip /><Tool i="extract" t="从模型提取工程量" off /></Band>
      </div>
      <div className="flex h-[29px] shrink-0">
        <Band><Grip /><Tool i="cursor" t="选择" caret /><Sep /><Tool i="line" t="直线" on /><Tool i="ptlen" t="点加长度" /><Tool i="arc" t="三点画弧" caret />
          <Combo v="" w="w-[54px]" label="弧参数" /><Tool i="rect" t="矩形" /><Sep /><Tool i="smart" t="智能布置" caret /><Sep /><Tool i="elbow" t="设置弯头" />
        </Band>
      </div>
      <div className="relative flex-1 overflow-hidden bg-black">
        <Scene />
        <ImeBar />
      </div>
      <div className="flex h-[29px] shrink-0 pb-px text-[#7f7f7f]">
        <Band><Grip /><span className="w-0.5" /><Combo v="不偏移" w="w-14" off label="偏移方式" /><Sep />
          <span className="mr-1">X=</span><Spin v="0" w="w-[42px]" label="X" /><span className="mr-1 ml-[3px]">mm</span>
          <span className="mr-1">Y=</span><Spin v="0" w="w-[42px]" label="Y" /><span className="ml-[3px]">mm</span><Sep />
          <label className="flex items-center gap-1.5 text-black"><input type="checkbox" className="size-[13px] appearance-none border border-[#333] bg-white" />旋转</label>
          <span className="w-1.5" /><Spin v="0.000" w="w-[52px]" label="旋转角度" /><span className="mx-1">°</span>
        </Band>
        <Band className="ml-16 text-black"><Grip /><Tool i="ortho" t="正交" /><Tool i="cross" t="交点" /><Tool i="perp" t="垂点" on /><Tool i="mid" t="中点" on /><Tool i="vertex" t="顶点" on /><Tool i="coord" t="坐标" /></Band>
      </div>
    </main>
  );
}

/* ---------- status + taskbar ---------- */
const cellCls = "border-r border-[#d4d4d4] pl-px";
function Status() {
  return (
    <div className={`flex h-[22px] shrink-0 items-stretch border-t border-[#d0d0d0] pb-px leading-5 ${SONG}`}>
      <span className={`w-[150px] ${cellCls}`}>X=-10790 Y=-1413</span>
      <span className={`w-20 ${cellCls}`}>层高:4.5m</span>
      <span className={`w-[130px] ${cellCls}`}>建筑底标高:0m</span>
      <span className={`w-[50px] ${cellCls}`}>0</span>
      <span className={`w-[250px] ${cellCls}`} />
      <span className={`flex-1 ${cellCls}`} />
      <span className={`w-[70px] ${cellCls}`}>342.1FPS</span>
      <span className="w-[150px]" />
    </div>
  );
}
const apps = [
  ["任务视图", 0, 51, <><path d="M7 5h10v14H7z" fill="none" stroke="#fff" strokeWidth="1.300" /><path d="M5 7H2.500v10H5M19 7h2.500v10H19" fill="none" stroke="#fff" strokeWidth="1.300" /></>],
  ["应用", 0, 51, <g fill="#e8e8e8" stroke="#111" strokeWidth=".7"><path d="M12 12C4 13 0 9 2 4c3-4 10-3 10 8z" /><path d="M12 12C10 4 14-1 20 2c4 3 2 10-8 10z" /><path d="M12 12c8-1 12 3 10 8-3 4-10 3-10-8z" /><path d="M12 12c2 8-2 13-8 10-4-3-2-10 8-10z" /></g>],
  ["浏览器", 0, 51, <><path d="M12 14c-1-3 4-3 4 0 0 4-8 5-9-1-1-7 8-9 12-5M19 14c-1 8-14 9-16 0" fill="none" stroke="#ccc" strokeWidth="1.600" /><path d="M21-3c3 1 4 3 4 6l2 4H16l2-4c0-3 0-5 3-6z" fill="#e8a810" /></>],
  ["Edge", 1, 49, <path d="M2 11C3 4 8 1 13 1c6 0 9 5 9 11v2H9c0 6 8 6 12 3v5C14 26 4 24 4 15c0-4 3-7 6-8-1 1-2 2-2 4h8c0-7-10-6-14 0z" fill="#0078d7" />],
  ["文件资源管理器", 0, 49, <><path d="M1 3h8l2 2h12v16H1z" fill="#f5cf66" /><path d="M3 7h20v13H3z" fill="#fbe39a" /><path d="M6 22v-8h13v8h-4v-4h-5v4z" fill="#3aa5e8" /></>],
  ["应用商店", 0, 49, <><path d="M2 7l20-1v17L2 21z" fill="#fff" /><path d="M8 7c0-7 8-7 8-1" fill="none" stroke="#fff" strokeWidth="1.500" /><path d="M7 11h4v4H7zM12.500 11h4v4h-4zM7 16.500h4v3H7zM12.500 16.500h4v3.500h-4z" fill="#111" /></>],
  ["广联达", 0, 49, <><path d="M23 2c-4-2-21-2-21 11 0 7 6 10 11 10 6 0 9-4 8-11l-8 1c4 2 2 5-1 5-6-1-4-11 11-16z" fill="#1a8fe8" /><path d="M8 4c-5 4-6 10-3 14" stroke="#65c3ff" strokeWidth="2" fill="none" /></>],
  ["微信", 1, 49, <><ellipse cx="9" cy="9" rx="8.500" ry="7.500" fill="#7bc928" /><path d="M4 14l-1 5 5-3" fill="#7bc928" /><ellipse cx="17" cy="16" rx="7" ry="6" fill="#ececec" /><circle cx="6" cy="7" r="1" /><circle cx="12" cy="7" r="1" /><circle cx="15" cy="14" r="1" fill="#888" /><circle cx="20" cy="14" r="1" fill="#888" /></>],
  ["Word", 1, 49, <><path d="M12 3h11v18H12z" fill="#fff" stroke="#2b579a" /><path d="M15 7h6M15 10h6M15 13h6M15 16h6" stroke="#2b579a" strokeWidth="1.500" /><path d="M1 3l13-3v24L1 21z" fill="#2b579a" /><path d="M4 8l2 8 2-7 2 7 2-8" fill="none" stroke="#fff" strokeWidth="1.500" /></>],
  ["GCL2013", 2, 49, <><rect x="0" y="0" width="24" height="24" rx="4" fill="#2ebd6a" /><path d="M8 5v14M8 12h10M18 9v7M5 5h6M5 19h6" stroke="#fff" strokeWidth="2" /></>],
  ["画图", 1, 49, <><ellipse cx="11" cy="14" rx="10" ry="9" fill="#cfe4f5" stroke="#7fa3c4" /><circle cx="7" cy="10" r="2" fill="#e33" /><circle cx="12" cy="8" r="2" fill="#f5b800" /><circle cx="5" cy="15" r="2" fill="#3a3" /><circle cx="9" cy="19" r="2" fill="#28c" /><path d="M13 20l7-15" stroke="#e8943a" strokeWidth="3" /><path d="M19 6c-1-4 2-5 3-6 1 3 1 5-1 7z" fill="#c78a50" /></>],
];
function Taskbar() {
  return (
    <footer className="flex h-10 shrink-0 items-stretch bg-linear-to-r from-[#050404] via-[#1b1a18] to-[#060402] text-white">
      <button aria-label="开始" className="flex w-12 items-center justify-center"><svg className="size-4" viewBox="0 0 16 16"><path d="M0 2l7-1v7H0zM8 1l8-1v8H8zM0 9h7v6l-7-1zM8 9h8v7l-8-1z" fill="#fff" /></svg></button>
      <label className="flex w-[344px] items-center bg-[#333] pl-[9px]">
        <svg className="size-[22px]" viewBox="0 0 22 22"><circle cx="11" cy="11" r="9.500" fill="none" stroke="#eee" strokeWidth="2.500" /></svg>
        <input aria-label="搜索" placeholder="在这里输入你要搜索的内容" className="ml-[5px] min-w-0 flex-1 bg-transparent text-sm placeholder:text-[#9d9d9d]" />
        <svg className="mr-3.5 h-4 w-3" viewBox="0 0 12 16"><rect x="3.500" y=".5" width="5" height="9" rx="1" fill="none" stroke="#aaa" /><path d="M1 7v5h10V7M6 12v3M3 15.500h6" fill="none" stroke="#aaa" /></svg>
      </label>
      {apps.map(([n, s, w, g]) => (
        <button key={n} aria-label={n} className={`flex flex-col items-center px-1 ${w === 51 ? "w-[51px]" : "w-[49px]"} ${s === 2 ? "bg-[#3f3d3b]" : ""}`}>
          <span className="flex flex-1 items-center"><svg className="size-[23px] overflow-visible" viewBox="0 0 24 24">{g}</svg></span>
          <span className={`h-0.5 self-stretch ${s ? "bg-[#76b9ed]" : ""}`} />
        </button>
      ))}
      <span className="flex-1" />
      <div className="flex items-center gap-2">
        <svg className="mr-0.5 h-2 w-3" viewBox="0 0 12 8"><path d="M1 7l5-5 5 5" fill="none" stroke="#fff" strokeWidth="1.500" /></svg>
        <svg className="size-4" viewBox="0 0 16 16"><rect x="1" y="1" width="14" height="14" fill="#777" stroke="#ddd" strokeWidth="1.500" /><path d="M2 11h12M8 11v3" stroke="#333" /></svg>
        <svg className="size-4" viewBox="0 0 16 16"><circle cx="8" cy="8" r="8" fill="#f4d81c" /><path d="M1 5a8 8 0 0 1 14 0c-5-2-8 2-14 0z" fill="#55b82e" /><path d="M8 4v8M4 8h8" stroke="#1c5f12" strokeWidth="2.500" /></svg>
        <svg className="size-4" viewBox="0 0 16 16"><path d="M2 14A12 12 0 0 1 14 2M5 14a9 9 0 0 1 9-9M8 14a6 6 0 0 1 6-6" fill="none" stroke="#eee" strokeWidth="1.300" /><circle cx="12.500" cy="12.500" r="1.800" fill="#fff" /></svg>
        <svg className="size-4" viewBox="0 0 16 16"><path d="M5 5h10v8H5z" fill="#fff" stroke="#999" /><path d="M1 2v3h4V2M3 5v7h2M1.500 0v3M4.500 0v3" stroke="#fff" fill="none" /></svg>
        <svg className="size-4" viewBox="0 0 16 16"><path d="M0 6h2l4-4v12l-4-4H0zM9 5c1 2 1 4 0 6M11 3c2 3 2 7 0 10M13 1c3 4 3 10 0 14" fill="none" stroke="#fff" /></svg>
        <span className="size-4 bg-[#e03a2a] text-center leading-4">中</span>
        <svg className="mr-[11px] ml-[3px] size-4" viewBox="0 0 16 16"><path d="M0 0h16v16H0z" fill="#d8d8d8" /><path d="M0 4h3v6H0zM13 4h3v6h-3z" fill="#1a8a8a" /><circle cx="8" cy="7" r="5" fill="#fff" stroke="#333" /><circle cx="8" cy="7" r="2.500" fill="#e00" /><path d="M5 13h6" stroke="#22c" strokeWidth="2" /><path d="M6 15h6" stroke="#c00" /></svg>
      </div>
      <div className="flex w-[74px] flex-col items-center justify-center pr-1 leading-[19px]"><span>10:40</span><span>2017/8/29</span></div>
      <button aria-label="通知" className="relative mr-[13px] ml-2.5 w-6">
        <svg className="size-6" viewBox="0 0 24 24"><path d="M1 2h16v13H9l-4 4v-4H1z" fill="#fff" /><path d="M4 6h10M4 9h10M4 12h6" stroke="#222" /><circle cx="16" cy="17" r="7.500" fill="#333" stroke="#999" /></svg>
        <span className="absolute right-1 bottom-2 text-xs leading-3 font-bold">2</span>
      </button>
      <span className="w-[5px] border-l border-[#666]" />
    </footer>
  );
}

/* ---------- hand-drawn annotations and desktop widgets ---------- */
function Annotations() {
  return (
    <svg className="pointer-events-none absolute top-0 left-0 z-30 h-[1080px] w-[1920px]" viewBox="0 0 1920 1080" aria-hidden="true">
      <g fill="none" stroke="#ee1c24" strokeWidth="5" strokeLinecap="round" strokeLinejoin="round">
        <rect x="148" y="120" width="141" height="89" rx="16" />
        <rect x="21" y="647" width="127" height="27" rx="11" />
        <path d="M110 635L223 180L221 292M164 265L206 206M289 197L1091 449M1006 371L1091 447M976 436L1091 449" />
      </g>
    </svg>
  );
}

export default function App() {
  return (
    <div className={`relative flex min-h-screen flex-col overflow-hidden bg-[#f0f0f0] text-xs leading-4 text-black ${UI}`}>
      <Header />
      <div className="flex flex-1">
        <Sidebar />
        <ListPanel />
        <Workspace />
      </div>
      <Status />
      <Taskbar />
      <Annotations />
      <div className="absolute top-[153px] -right-7 z-20 size-12 rounded-full border-2 border-[#a8a8a8] bg-linear-to-b from-[#8fe39a] to-[#2fc04d] pl-[3px] text-xs leading-[44px] font-bold text-white ring-2 ring-white ring-inset">23</div>
      <div className="absolute top-[622px] right-0 z-20 flex h-[60px] w-2 flex-col items-center justify-center gap-0.5 bg-[#1a2438]"><span className="h-px w-1 bg-[#7d90b5]" /><span className="h-px w-1 bg-[#7d90b5]" /><span className="h-px w-1 bg-[#7d90b5]" /></div>
    </div>
  );
}
